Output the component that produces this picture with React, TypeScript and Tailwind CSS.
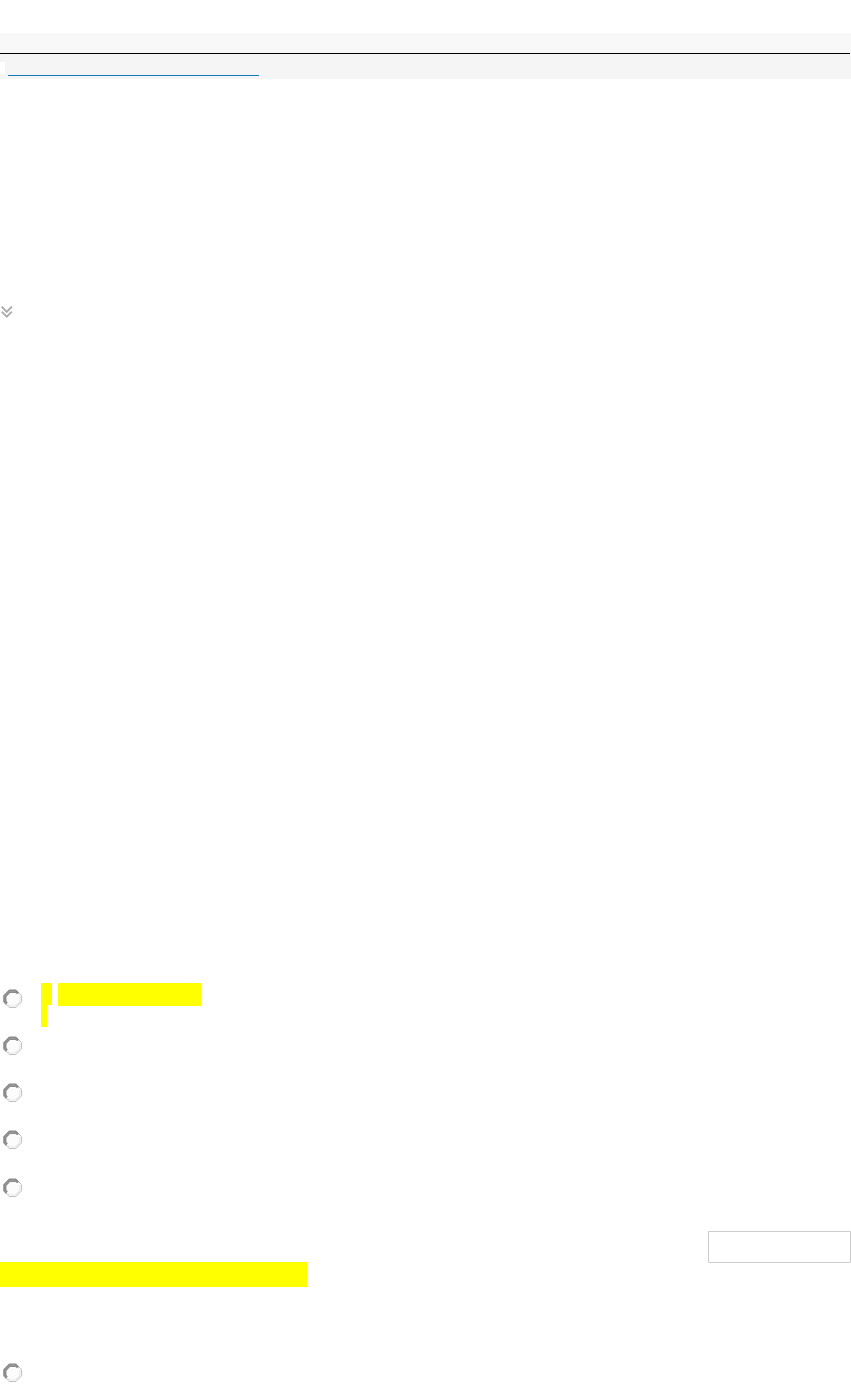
function Radio() {
  return (
    <svg className="block shrink-0" width="20" height="20" viewBox="0.3 -0.3 20 20" fill="none">
      <path d="M6.6 .6h6.6L18.9 6.3v6.2L13.2 18.2H6.6L.9 12.5V6.3z" fill="#fcfcfc" stroke="#c0c0c0" />
      <path d="M3.7 15L1.5 12.5V6.5L6.6 1.3h6.6l2.6 2.6" stroke="#8c8c8c" strokeWidth="1.6" />
      <path d="M4.4 14L2.9 11.8V7.1L7 2.8h6l2 1.4" stroke="#8c8c8c" strokeWidth="1.7" />
      <path d="M5 15.3l2.2 1.4h5.4l4.6-4.4V7" stroke="#e8e8e8" strokeWidth="1.2" />
    </svg>
  )
}

function Chevrons() {
  return (
    <svg className="block" width="14" height="12" viewBox="0 0 14 12" fill="none" stroke="#acacac" strokeWidth="1.9">
      <path d="M1.7 .5l5 5.4L11.9 .5" />
      <path d="M1.7 5.6l5 5L11.9 5.6" />
    </svg>
  )
}

export default function App() {
  return (
    <div className="flex h-[1389px] w-[851px] flex-col overflow-hidden bg-white font-['Liberation_Sans',sans-serif]">
      {/* Header */}
      <header className="mt-[33px] flex h-[46px] shrink-0 flex-col bg-[#f5f5f5]">
        <div className="h-5 bg-[#f8f8f8]" />
        <div className="h-px w-[850px] bg-black" />
        <div className="h-px w-[850px] bg-[#fbf5fa]" />
        <div className="flex h-[21px] items-end">
          <div className="mb-[2px] h-3 w-[4.5px] rounded-r-[1px] bg-white" />
          <div className="ml-[3.5px] h-px w-[251px] bg-[#1479b8]" />
        </div>
      </header>

      <div className="mt-[227px] h-3 shrink-0">
        <Chevrons />
      </div>

      {/* Answers */}
      <main className="mt-[665px] flex h-[248px] shrink-0 flex-col">
        <div className="flex h-[47px] shrink-0">
          <div className="ml-[3px] mt-[6px] w-[38px]">
            <Radio />
          </div>
          <div className="flex flex-col">
            <div className="flex h-[22px] gap-[6px]">
              <div className="w-[11px] bg-[#ffff00]" />
              <div className="h-[23px] w-[143px] bg-[#ffff00]" />
            </div>
            <div className="h-[22px] w-[6px] bg-[#ffff00]" />
          </div>
        </div>
        {[1, 2, 3, 4].map((n) => (
          <div key={n} className="h-[47px] shrink-0 pl-[3px] pt-[6px] last:pt-[7px]">
            <Radio />
          </div>
        ))}
      </main>

      {/* Action box and highlighted line */}
      <section className="flex h-14 shrink-0 items-end justify-between">
        <div className="h-[25px] w-[307px] bg-[#ffff00]" />
        <div className="mb-6 h-8 w-[143px] rounded-b-[1px] border border-[#cccccc]" />
      </section>

      <div className="mt-[76px] pl-[3px]">
        <Radio />
      </div>
    </div>
  )
}
